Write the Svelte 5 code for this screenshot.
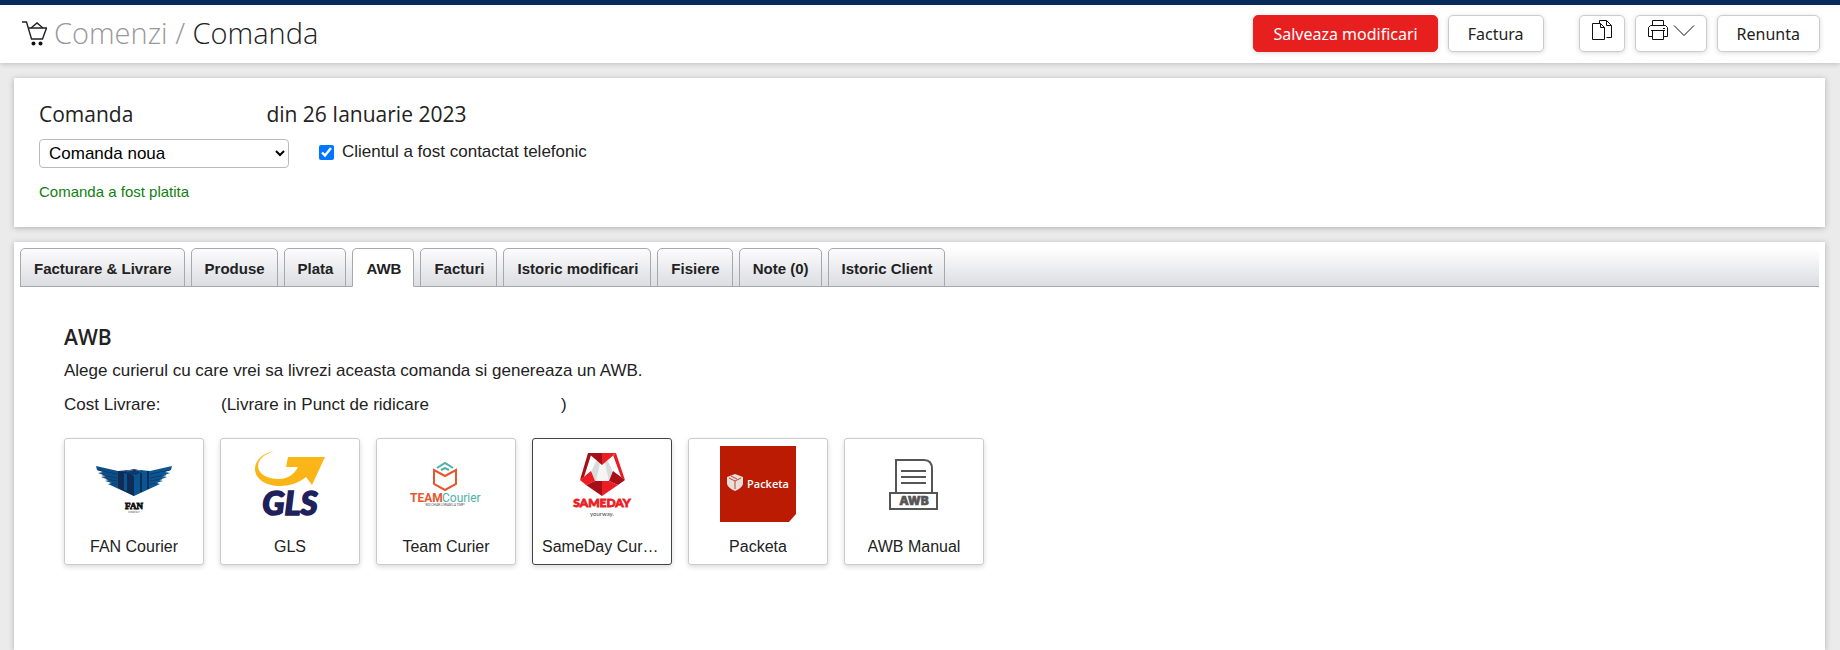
<script lang="ts">
	const tabs = [
		'Facturare & Livrare',
		'Produse',
		'Plata',
		'AWB',
		'Facturi',
		'Istoric modificari',
		'Fisiere',
		'Note (0)',
		'Istoric Client'
	];
	const couriers = [
		{ id: 'fan', name: 'FAN Courier' },
		{ id: 'gls', name: 'GLS' },
		{ id: 'team', name: 'Team Curier' },
		{ id: 'sameday', name: 'SameDay Curierat' },
		{ id: 'packeta', name: 'Packeta' },
		{ id: 'manual', name: 'AWB Manual' }
	];

	let activeTab = $state('AWB');
	let courier = $state('sameday');
	let contacted = $state(true);
</script>

<div class="page">
	<header>
		<h1>
			<svg class="cart" viewBox="0 0 25 25" aria-hidden="true">
				<g fill="none" stroke="#222" stroke-width="1.4">
					<path d="M0 1h4.500l5 17h11l4-11H6.500" />
					<path d="M9 7l6-5 6 5" />
				</g>
				<circle cx="11.500" cy="22.500" r="2" fill="#111" />
				<circle cx="18.500" cy="22.500" r="2" fill="#111" />
			</svg>
			<span><a href="#comenzi">Comenzi /</a> Comanda</span>
		</h1>
		<div class="actions">
			<button class="btn primary">Salveaza modificari</button>
			<button class="btn invoice">Factura</button>
			<button class="btn icon" aria-label="Copiaza">
				<svg width="22" height="22" viewBox="0 0 22 22" fill="none" stroke="#111">
					<path d="M1.500 3.500h8l4 4v12h-12zM9.500 3.500v4h4" />
					<path d="M8.500 3V.500h7l5 5v12h-5M15.500.500v5h5" />
				</svg>
			</button>
			<button class="btn icon" aria-label="Printeaza">
				<svg width="22" height="22" viewBox="0 0 22 22" fill="none" stroke="#111">
					<path d="M5.500 5.500v-5h11v5M5.500 16.500h-4v-9l2-2h15l2 2v9h-4" />
					<path d="M5.500 10.500h11v9h-11zM4 10.500h14M16 8.500h2" />
				</svg>
				<svg width="22" height="22" viewBox="0 0 22 22" fill="none" stroke="#111">
					<path d="M1 5.500l10 10 10-10" />
				</svg>
			</button>
			<button class="btn">Renunta</button>
		</div>
	</header>

	<section class="panel summary">
		<h2><span>Comanda</span><span>din 26 Ianuarie 2023</span></h2>
		<div class="fields">
			<select aria-label="Status comanda">
				<option>Comanda noua</option>
			</select>
			<label>
				<input type="checkbox" bind:checked={contacted} />
				Clientul a fost contactat telefonic
			</label>
		</div>
		<p class="paid">Comanda a fost platita</p>
	</section>

	<section class="panel details">
		<div class="tabs" role="tablist">
			{#each tabs as tab}
				<button
					class="tab"
					class:active={tab === activeTab}
					role="tab"
					aria-selected={tab === activeTab}
					onclick={() => (activeTab = tab)}>{tab}</button
				>
			{/each}
		</div>

		<div class="content">
			<h3>AWB</h3>
			<p>Alege curierul cu care vrei sa livrezi aceasta comanda si genereaza un AWB.</p>
			<p class="cost">
				<span>Cost Livrare:</span><span class="pickup">(Livrare in Punct de ridicare</span><span
					>)</span
				>
			</p>
			<div class="couriers">
				{#each couriers as item}
					<button
						class="courier"
						class:selected={item.id === courier}
						onclick={() => (courier = item.id)}
					>
						<svg class="logo" viewBox="0 0 76 76" aria-hidden="true">
							{#if item.id === 'fan'}
								<path fill="#0b4f8a" d="M0 20l22 5 10-1 6 6v20L12 38l4-1-7-2 4-1-8-3 5-1-8-3 5-1-6-2z" />
								<path fill="#0a5695" d="M76 20l-22 5-10-1-6 6v20l26-12-4-1 7-2-4-1 8-3-5-1 8-3-5-1 6-2z" />
								<path fill="#102c55" d="M22 25l8 1 8 4v20l-16-8z" />
								<path fill="#0a5695" d="M28 27l3 1v17l-3-1z" />
								<path fill="#0b3a6b" d="M29 25l9-2 9 2-9 5z" />
								<path fill="none" stroke="#4f8fbe" stroke-width=".8" d="M31 25l6-1M40 24l5 1" />
								<path fill="none" stroke="#0a2547" stroke-width="1.600" d="M45 27v19M52 25v18" />
								<path fill="none" stroke="#12365f" stroke-width=".8" d="M2 24l19 4M6 29l15 3M10 33l11 2M14 37l7 1M74 24l-20 4M70 29l-16 3M66 33l-12 2M62 37l-8 1" />
								<text x="38" y="63" font-family="Liberation Serif, serif" font-size="9" font-weight="700" text-anchor="middle" stroke="#111" stroke-width="0.800" fill="#111">FAN</text>
								<text x="38" y="67" font-family="Liberation Serif, serif" font-size="4" text-anchor="middle" fill="#555">courier</text>
							{:else if item.id === 'gls'}
								<path fill="#fbb517" d="M22 5C11 7 3 14 3 23c0 10 11 17 25 17 11 0 20-4 26-9l6 8L73 11H36l-2 10h12c-4 8-11 12-19 12C14 33 6 27 6 20 6 13 13 8 22 5z" />
								<text x="38" y="69" font-family="Lato, sans-serif" font-size="33" font-weight="900" font-style="italic" text-anchor="middle" stroke="#20205b" stroke-width="1.500" fill="#20205b">GLS</text>
							{:else if item.id === 'team'}
								<path fill="none" stroke="#e7572e" stroke-width="2" d="M26 24v14l11 6 11-6V24l-11 6z" />
								<path fill="none" stroke="#4cb1a6" stroke-width="2" d="M29 22l8-5 8 5M33 24l4-2 4 2" />
								<text x="2" y="56" font-family="Roboto, sans-serif" font-size="12" font-weight="700" fill="#e7572e">TEAM</text>
								<text x="34" y="56" font-family="Roboto, sans-serif" font-size="12" fill="#4cb1a6">Courier</text>
								<text x="37" y="60" font-family="Roboto, sans-serif" font-size="3" text-anchor="middle" fill="#444">NOI CHIAR LIVRAM LA TIMP!</text>
							{:else if item.id === 'sameday'}
								<path fill="#d9dadb" d="M32 15l6-2 6 2 9 20H23z" />
								<path fill="#f5f5f5" d="M36 17l2-2 3 2 4 18H32z" />
								<path fill="#ec1c24" d="M52 7l-3 2 8 22 4 3zM38 7h14L38 19z" />
								<path fill="#a60f17" d="M24 7l3 2-7 22-4 3zM24 7h14v12z" />
								<path fill="#ec1c24" d="M16 34l11-9 4 10-9 4z" />
								<path fill="#a60f17" d="M61 34l-12-9-4 10 9 4zM31 35h7v15l-16-11z" />
								<path fill="#ec1c24" d="M38 35h7l9 4-16 11z" />
								<text x="38" y="61" font-family="Lato, sans-serif" font-size="12" font-weight="900" text-anchor="middle" stroke="#ec1c24" stroke-width="0.800" fill="#ec1c24">SAMEDAY</text>
								<text x="38" y="70" font-family="Lato, sans-serif" font-size="6" text-anchor="middle" fill="#444">yourway.</text>
							{:else if item.id === 'packeta'}
								<path fill="#ba1b02" d="M0 0h76v68l-7 8H0z" />
								<path fill="#e9dedb" d="M7 31l8-3 8 3v7q-1 4-8 7-7-3-8-7z" />
								<path fill="none" stroke="#ba1b02" stroke-width=".8" d="M9 32l6 3 6-3M15 35v8M11 30l6 3" />
								<text x="27" y="42" font-family="Open Sans, sans-serif" font-size="11" font-weight="600" fill="#fff">Packeta</text>
							{:else}
								<g fill="none" stroke="#555" stroke-width="2">
									<path d="M20 47V14h28q8 0 8 9v24M14 47h47v16H14z" />
									<path d="M25 25h25M25 31h25M25 37h25" />
								</g>
								<text x="38" y="59" font-family="Inter, sans-serif" font-size="12" font-weight="900" text-anchor="middle" stroke="#555" stroke-width="0.500" fill="#555">AWB</text>
							{/if}
						</svg>
						<span class="name">{item.name}</span>
					</button>
				{/each}
			</div>
		</div>
	</section>
</div>

<style>
	:global(*) {
		box-sizing: border-box;
	}
	:global(body) {
		margin: 0;
		background: #ebebeb;
		color: #222;
		font-family: 'Liberation Sans', Arial, sans-serif;
		font-size: 17px;
	}
	h1,
	h2,
	h3,
	p {
		margin: 0;
	}
	button {
		font: inherit;
		color: inherit;
		cursor: pointer;
	}
	.page {
		display: flex;
		flex-direction: column;
		min-height: 100vh;
	}
	header {
		display: flex;
		justify-content: space-between;
		height: 63px;
		padding: 0 20px 0 22px;
		border-top: 5px solid #072b5a;
		background: #fff;
		box-shadow: 0 1px 5px rgba(0, 0, 0, 0.2);
	}
	h1 {
		display: flex;
		align-items: center;
		gap: 7px;
		padding-bottom: 2px;
		font-family: 'Open Sans', sans-serif;
		font-size: 29px;
		font-weight: 300;
		line-height: 40px;
	}
	h1 a {
		color: #999;
		text-decoration: none;
	}
	.cart {
		width: 25px;
		height: 25px;
	}
	.actions {
		display: flex;
		gap: 10px;
		padding-top: 10px;
	}
	.btn {
		height: 37px;
		padding: 0 19px;
		border: 1px solid #ccc;
		border-radius: 5px;
		background: #fff;
		box-shadow: 0 1px 5px rgba(0, 0, 0, 0.15);
		font-family: 'Noto Sans', sans-serif;
		font-size: 16px;
	}
	.primary {
		background: #e71f1f;
		border-color: #e71f1f;
		color: #fff;
	}
	.invoice {
		margin-right: 25px;
	}
	.icon {
		display: flex;
		gap: 4px;
		padding: 4px 11px;
	}
	.panel {
		margin: 15px 15px 0 14px;
		background: #fff;
		box-shadow: 0 1px 6px rgba(0, 0, 0, 0.25);
	}
	.summary {
		padding: 20px 25px 25px;
	}
	h2 {
		display: flex;
		gap: 133px;
		font-family: 'Open Sans', sans-serif;
		font-size: 21px;
		font-weight: 400;
		line-height: 32px;
	}
	.fields {
		display: flex;
		align-items: flex-start;
		gap: 30px;
		margin-top: 9px;
	}
	select {
		width: 250px;
		height: 29px;
		padding: 0 5px;
		border: 1px solid #bbb;
		border-radius: 4px;
		background: #fff;
		color: #000;
		font: inherit;
	}
	label {
		display: flex;
		align-items: center;
		gap: 8px;
		line-height: 26px;
	}
	input {
		width: 15px;
		height: 15px;
		margin: 0;
	}
	.paid {
		margin-top: 14px;
		color: #118011;
		font-size: 15px;
		line-height: 20px;
	}
	.details {
		flex: 1;
		padding: 6px 6px 0;
	}
	.tabs {
		display: flex;
		gap: 6px;
		border-bottom: 1px solid #a7a7ad;
		background: linear-gradient(#fff, #dcdde2);
	}
	.tab {
		height: 39px;
		margin-bottom: -1px;
		padding: 2px 12px 0 13px;
		border: 1px solid #a7a7ad;
		border-radius: 5px 5px 0 0;
		background: linear-gradient(#fcfcfd, #dcdde2);
		font-size: 15px;
		font-weight: 700;
	}
	.tab.active {
		border-bottom-color: #fff;
		background: #fff;
	}
	.content {
		padding: 33px 44px;
		line-height: 34px;
	}
	h3 {
		font-family: 'Open Sans', sans-serif;
		font-size: 21px;
		font-weight: 600;
	}
	.cost {
		display: flex;
	}
	.cost span:first-child {
		width: 157px;
	}
	.pickup {
		width: 340px;
	}
	.couriers {
		display: flex;
		flex-wrap: wrap;
		gap: 16px;
		margin-top: 16px;
	}
	.courier {
		display: flex;
		flex-direction: column;
		align-items: center;
		gap: 15px;
		width: 140px;
		padding: 7px 9px;
		border: 1px solid #ccc;
		border-radius: 3px;
		background: #fff;
		box-shadow: 0 2px 5px rgba(0, 0, 0, 0.15);
		font-size: 16px;
		line-height: 20px;
	}
	.courier.selected {
		border-color: #444;
	}
	.logo {
		width: 76px;
		height: 76px;
	}
	.name {
		max-width: 100%;
		overflow: hidden;
		text-overflow: ellipsis;
		white-space: nowrap;
	}
</style>
